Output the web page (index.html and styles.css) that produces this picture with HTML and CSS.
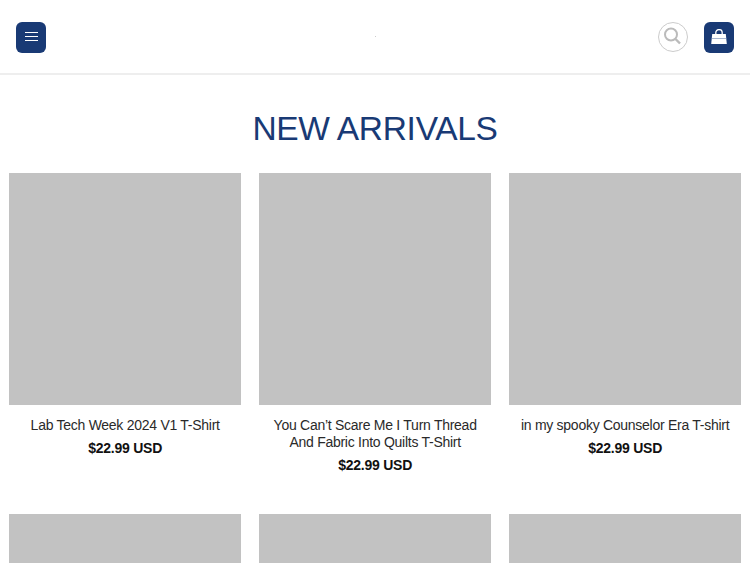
FILE: index.html
```html
<!DOCTYPE html>
<html lang="en">
<head>
  <meta charset="UTF-8">
  <meta name="viewport" content="width=device-width, initial-scale=1.0">
  <title>New Arrivals</title>
  <link rel="stylesheet" href="styles.css">
</head>
<body>
  <header class="site-header">
    <div class="header-left">
      <button class="icon-btn" aria-label="Menu">
        <svg width="13" height="10" viewBox="0 0 13 10"><path d="M0 .5h13M0 4.500h13M0 8.500h13" stroke="#fff" stroke-width="1" fill="none"/></svg>
      </button>
    </div>
    <span class="logo-dot"></span>
    <div class="header-right">
      <button class="search-btn" aria-label="Search">
        <svg width="20" height="20" viewBox="0 0 20 20"><circle cx="8" cy="7.500" r="6" stroke="#bbb" stroke-width="2" fill="none"/><path d="M12.500 12l4.500 4.500" stroke="#bbb" stroke-width="2.400" fill="none"/></svg>
      </button>
      <button class="icon-btn" aria-label="Cart">
        <svg width="16" height="16" viewBox="0 0 16 16"><path d="M1.200 5h13.600l1 10H.2z" fill="#fff"/><path d="M4.800 7V3.700a3.200 3.100 0 0 1 6.400 0V7" stroke="#fff" stroke-width="1.300" fill="none"/><path d="M.8 9.500h14.400" stroke="#8fa2c4" stroke-width=".8"/></svg>
      </button>
    </div>
  </header>

  <h1 class="section-title">NEW ARRIVALS</h1>

  <main class="product-grid">
    <div class="product">
      <div class="product-img"></div>
      <p class="product-name">Lab Tech Week 2024 V1 T-Shirt</p>
      <p class="product-price">$22.99 USD</p>
    </div>
    <div class="product">
      <div class="product-img"></div>
      <p class="product-name">You Can’t Scare Me I Turn Thread And Fabric Into Quilts T-Shirt</p>
      <p class="product-price">$22.99 USD</p>
    </div>
    <div class="product">
      <div class="product-img"></div>
      <p class="product-name">in my spooky Counselor Era T-shirt</p>
      <p class="product-price">$22.99 USD</p>
    </div>
    <div class="product">
      <div class="product-img"></div>
    </div>
    <div class="product">
      <div class="product-img"></div>
    </div>
    <div class="product">
      <div class="product-img"></div>
    </div>
  </main>
</body>
</html>
```

FILE: styles.css
```css
body {
  margin: 0;
  display: flex;
  flex-direction: column;
  height: 100vh;
  overflow: hidden;
  font-family: "Liberation Sans", Arial, sans-serif;
  background-color: #fff;
}

.site-header {
  display: flex;
  flex: none;
  align-items: center;
  height: 73px;
  padding: 0 16px;
  border-bottom: 2px solid #eee;
}

.header-left,
.header-right {
  display: flex;
  flex: 1;
  align-items: center;
}

.header-right {
  justify-content: flex-end;
  gap: 16px;
}

.icon-btn {
  display: flex;
  align-items: center;
  justify-content: center;
  width: 30px;
  height: 31px;
  margin-top: 1px;
  padding: 0;
  border: none;
  border-radius: 6px;
  background-color: #193a75;
}

.search-btn {
  display: flex;
  align-items: center;
  justify-content: center;
  width: 30px;
  height: 30px;
  margin-top: 1px;
  padding: 0;
  border: 1px solid #ccc;
  border-radius: 50%;
  background-color: #fff;
}

.logo-dot {
  width: 1px;
  height: 1px;
  background-color: #ccc;
}

.section-title {
  flex: none;
  margin: 34px 0 24px;
  font-size: 33.500px;
  line-height: 40px;
  letter-spacing: -0.3px;
  font-weight: 400;
  text-align: center;
  color: #193a75;
}

.product-grid {
  display: grid;
  flex: 1;
  min-height: 0;
  overflow: hidden;
  grid-template-columns: repeat(3, 231.67px);
  column-gap: 18.33px;
  row-gap: 40px;
  padding: 0 9px 0 9.33px;
}

.product {
  text-align: center;
}

.product-img {
  height: 232px;
  background-color: #c2c2c2;
}

.product-name {
  margin: 12px 6px 6px;
  font-size: 14px;
  line-height: 17px;
  letter-spacing: -0.27px;
  color: #2a2a2a;
}

.product-price {
  margin: 0;
  font-size: 14px;
  line-height: 17px;
  letter-spacing: -0.25px;
  font-weight: 700;
  color: #111;
}
```
